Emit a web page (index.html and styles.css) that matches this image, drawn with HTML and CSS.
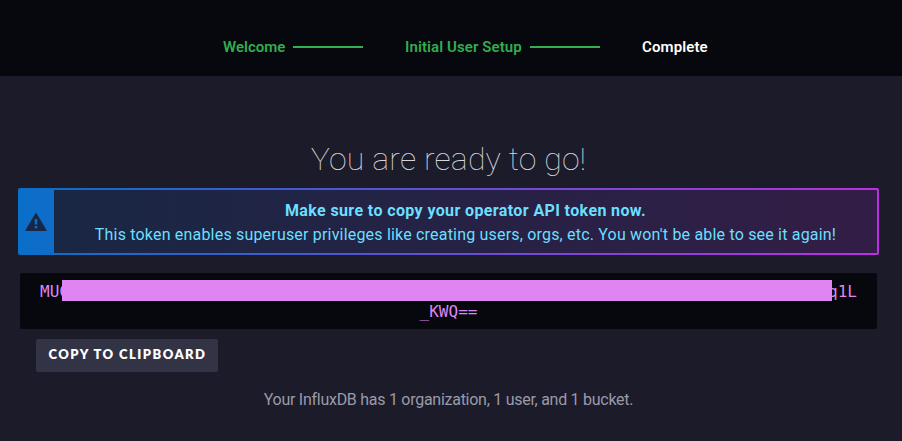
FILE: index.html
```
<!DOCTYPE html>
<html lang="en">
<head>
<meta charset="utf-8">
<title>InfluxDB Setup</title>
<link rel="stylesheet" href="styles.css">
</head>
<body>
<header class="progress">
  <span class="step step-welcome done">Welcome</span>
  <span class="connector"></span>
  <span class="step step-user done">Initial User Setup</span>
  <span class="connector"></span>
  <span class="step step-complete">Complete</span>
</header>
<main class="content">
  <h1 class="title">You are ready to go!</h1>
  <section class="notice">
    <div class="notice-icon">
      <svg width="22" height="20" viewBox="0 0 22 20"><path fill="#192744" fill-rule="evenodd" d="M11 .5 21.5 18v1H.5v-1ZM9.7 7v5.5h2.6V7Zm0 7v2.2h2.6V14Z"/></svg>
    </div>
    <div class="notice-body">
      <strong class="notice-heading">Make sure to copy your operator API token now.</strong>
      <span class="notice-text">This token enables superuser privileges like creating users, orgs, etc. You won't be able to see it again!</span>
    </div>
  </section>
  <div class="token">
    <div class="token-line"><span>MUC</span><span>q1L</span><i class="redaction"></i></div>
    <div class="token-end">_KWQ==</div>
  </div>
  <button class="copy">COPY TO CLIPBOARD</button>
  <p class="summary">Your InfluxDB has 1 organization, 1 user, and 1 bucket.</p>
</main>
</body>
</html>
```
FILE: styles.css
```
* { box-sizing: border-box; }
body {
  margin: 0;
  height: 441px;
  overflow: hidden;
  background: #1c1b29;
  font-family: Roboto, "Liberation Sans", sans-serif;
}
.progress {
  height: 76px;
  padding: 18px 0 0 223px;
  display: flex;
  align-items: center;
  background: #07070e;
}
.step {
  color: #fff;
  font-size: 15px;
  font-weight: 600;
  line-height: 20px;
  white-space: nowrap;
}
.done { color: #32ad4f; }
.step-welcome { width: 70px; }
.step-user { width: 125px; letter-spacing: 0.1px; }
.step-complete { letter-spacing: 0.12px; }
.connector {
  width: 70px;
  height: 2px;
  margin-right: 42px;
  background: #32b04f;
}
.content { padding: 63px 23px 0 18px; }
.title {
  height: 49px;
  margin: 0;
  color: #d5d5dd;
  font-size: 32px;
  font-weight: 100;
  line-height: 40px;
  letter-spacing: 0.15px;
  text-align: center;
  white-space: nowrap;
}
.notice {
  height: 67px;
  display: flex;
  padding: 2px;
  border-radius: 2px;
  background: linear-gradient(90deg, #096fc8, #be2ee4);
}
.notice-icon {
  width: 34px;
  padding-right: 2px;
  display: flex;
  align-items: center;
  justify-content: center;
}
.notice-body {
  flex: 1;
  display: flex;
  flex-direction: column;
  align-items: center;
  padding-top: 9px;
  color: #6bdfff;
  font-size: 16px;
  line-height: 24px;
  white-space: nowrap;
  background: linear-gradient(90deg, #192744, #331d46);
}
.notice-heading { letter-spacing: 0.38px; }
.notice-text { letter-spacing: 0.19px; }
.token {
  height: 56px;
  margin: 18px 2px 0;
  padding: 9px 20px;
  border-radius: 2px;
  background: #07070e;
  color: #de85f2;
  font: 16px/20px "DejaVu Sans Mono", monospace;
}
.token-line {
  position: relative;
  display: flex;
  justify-content: space-between;
}
.redaction {
  position: absolute;
  left: 22px;
  top: -2px;
  width: 770px;
  height: 21px;
  background: #de85f2;
}
.token-end { text-align: center; }
.copy {
  display: block;
  width: 182px;
  height: 33px;
  margin: 10px 0 0 18px;
  padding: 0 0 2px 1px;
  border: 0;
  border-radius: 2px;
  background: #333346;
  color: #fff;
  font: 800 13px/31px Lato, sans-serif;
  letter-spacing: 1.45px;
  white-space: nowrap;
}
.summary {
  margin: 16px 0 0;
  color: #9a9aaa;
  font-size: 16px;
  line-height: 24px;
  letter-spacing: -0.27px;
  text-align: center;
  white-space: nowrap;
}
```
